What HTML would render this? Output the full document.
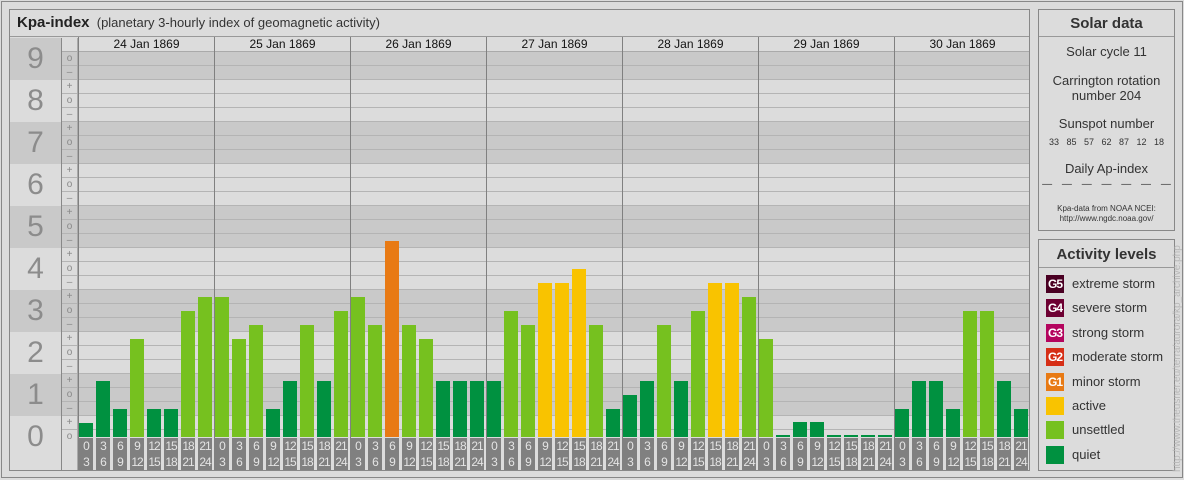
<!DOCTYPE html>
<html><head><meta charset="utf-8"><style>
*{margin:0;padding:0;box-sizing:border-box}
body{width:1184px;height:480px;background:#dcdcdc;font-family:"Liberation Sans",Arial,sans-serif;position:relative;overflow:hidden}
.abs{position:absolute}
.band{position:absolute;left:10px;width:1019px}
.d{background:#c9c9c9}
.num{position:absolute;left:10px;width:51px;text-align:center;font-size:30px;color:#8c8c8c;line-height:42px;height:42px}
.sub{position:absolute;left:61px;top:52px;width:17px}
.sub div{height:14px;line-height:14px;font-size:10px;color:#888;text-align:center}
.day{position:absolute;top:37px;width:136px;height:433px;border-left:1px solid #808080}
.dt{height:14px;line-height:14px;font-size:12px;text-align:center;color:#111}
.bars{position:absolute;left:0;top:14px;height:386px;width:136px;display:flex;align-items:flex-end;gap:3px;padding-left:0}
.bars div{width:14px}
.q{background:#009140}.u{background:#76c11f}.a{background:#f9c300}.m{background:#e87a14}
.lab{position:absolute;left:0;top:401px;display:flex;gap:3px}
.lab div{width:14px;height:32px;background:#808080;color:#e4e4e4;font-size:12px;line-height:16px;text-align:center;letter-spacing:-1px}
.leg{position:absolute;left:1046px;width:18px;height:18px;color:#fff;font-size:12px;font-weight:bold;line-height:18px;text-align:center;letter-spacing:-1px}
.lt{position:absolute;left:1072px;font-size:13px;color:#333;line-height:18px}
.c{text-align:center;color:#333;position:absolute;left:1038px;width:137px}
</style></head><body>
<div class="abs" style="left:1px;top:1px;width:1182px;height:477px;border:1px solid #888"></div>
<div class="abs" style="left:9px;top:9px;width:1021px;height:462px;border:1px solid #888;background:#dcdcdc"></div>
<div class="abs" style="left:10px;top:10px;width:1019px;height:27px;border-bottom:1px solid #999;font-size:13px;line-height:26px;padding-left:7px;color:#333"><b style="font-size:15px;color:#222">Kpa-index</b>&nbsp; (planetary 3-hourly index of geomagnetic activity)</div>
<div class="band d" style="top:38px;height:42px"></div>
<div class="band d" style="top:122px;height:42px"></div>
<div class="band d" style="top:206px;height:42px"></div>
<div class="band d" style="top:290px;height:42px"></div>
<div class="band d" style="top:374px;height:42px"></div>
<div class="abs" style="left:61px;top:38px;width:968px;height:14px;background:#dcdcdc;border-bottom:1px solid #aaa"></div>
<div class="abs" style="left:61px;top:52px;width:968px;height:385px;background:repeating-linear-gradient(to bottom,transparent 0,transparent 13px,#b4b4b4 13px,#b4b4b4 14px)"></div>
<div class="abs" style="left:61px;top:38px;width:1px;height:432px;background:#888"></div>
<div class="abs" style="left:77px;top:38px;width:1px;height:432px;background:#aaa"></div>
<div class="num" style="top:38px">9</div>
<div class="num" style="top:80px">8</div>
<div class="num" style="top:122px">7</div>
<div class="num" style="top:164px">6</div>
<div class="num" style="top:206px">5</div>
<div class="num" style="top:248px">4</div>
<div class="num" style="top:290px">3</div>
<div class="num" style="top:332px">2</div>
<div class="num" style="top:374px">1</div>
<div class="num" style="top:416px">0</div>
<div class="sub"><div>o</div><div>–</div><div>+</div><div>o</div><div>–</div><div>+</div><div>o</div><div>–</div><div>+</div><div>o</div><div>–</div><div>+</div><div>o</div><div>–</div><div>+</div><div>o</div><div>–</div><div>+</div><div>o</div><div>–</div><div>+</div><div>o</div><div>–</div><div>+</div><div>o</div><div>–</div><div>+</div><div>o</div></div>

<div class="day" style="left:78px"><div class="dt">24 Jan 1869</div><div class="bars"><div class="q" style="height:14px"></div><div class="q" style="height:56px"></div><div class="q" style="height:28px"></div><div class="u" style="height:98px"></div><div class="q" style="height:28px"></div><div class="q" style="height:28px"></div><div class="u" style="height:126px"></div><div class="u" style="height:140px"></div></div>
<div class="lab"><div>0<br>3</div><div>3<br>6</div><div>6<br>9</div><div>9<br>12</div><div>12<br>15</div><div>15<br>18</div><div>18<br>21</div><div>21<br>24</div></div></div>

<div class="day" style="left:214px"><div class="dt">25 Jan 1869</div><div class="bars"><div class="u" style="height:140px"></div><div class="u" style="height:98px"></div><div class="u" style="height:112px"></div><div class="q" style="height:28px"></div><div class="q" style="height:56px"></div><div class="u" style="height:112px"></div><div class="q" style="height:56px"></div><div class="u" style="height:126px"></div></div>
<div class="lab"><div>0<br>3</div><div>3<br>6</div><div>6<br>9</div><div>9<br>12</div><div>12<br>15</div><div>15<br>18</div><div>18<br>21</div><div>21<br>24</div></div></div>

<div class="day" style="left:350px"><div class="dt">26 Jan 1869</div><div class="bars"><div class="u" style="height:140px"></div><div class="u" style="height:112px"></div><div class="m" style="height:196px"></div><div class="u" style="height:112px"></div><div class="u" style="height:98px"></div><div class="q" style="height:56px"></div><div class="q" style="height:56px"></div><div class="q" style="height:56px"></div></div>
<div class="lab"><div>0<br>3</div><div>3<br>6</div><div>6<br>9</div><div>9<br>12</div><div>12<br>15</div><div>15<br>18</div><div>18<br>21</div><div>21<br>24</div></div></div>

<div class="day" style="left:486px"><div class="dt">27 Jan 1869</div><div class="bars"><div class="q" style="height:56px"></div><div class="u" style="height:126px"></div><div class="u" style="height:112px"></div><div class="a" style="height:154px"></div><div class="a" style="height:154px"></div><div class="a" style="height:168px"></div><div class="u" style="height:112px"></div><div class="q" style="height:28px"></div></div>
<div class="lab"><div>0<br>3</div><div>3<br>6</div><div>6<br>9</div><div>9<br>12</div><div>12<br>15</div><div>15<br>18</div><div>18<br>21</div><div>21<br>24</div></div></div>

<div class="day" style="left:622px"><div class="dt">28 Jan 1869</div><div class="bars"><div class="q" style="height:42px"></div><div class="q" style="height:56px"></div><div class="u" style="height:112px"></div><div class="q" style="height:56px"></div><div class="u" style="height:126px"></div><div class="a" style="height:154px"></div><div class="a" style="height:154px"></div><div class="u" style="height:140px"></div></div>
<div class="lab"><div>0<br>3</div><div>3<br>6</div><div>6<br>9</div><div>9<br>12</div><div>12<br>15</div><div>15<br>18</div><div>18<br>21</div><div>21<br>24</div></div></div>

<div class="day" style="left:758px"><div class="dt">29 Jan 1869</div><div class="bars"><div class="u" style="height:98px"></div><div class="q" style="height:2px"></div><div class="q" style="height:15px"></div><div class="q" style="height:15px"></div><div class="q" style="height:2px"></div><div class="q" style="height:2px"></div><div class="q" style="height:2px"></div><div class="q" style="height:2px"></div></div>
<div class="lab"><div>0<br>3</div><div>3<br>6</div><div>6<br>9</div><div>9<br>12</div><div>12<br>15</div><div>15<br>18</div><div>18<br>21</div><div>21<br>24</div></div></div>

<div class="day" style="left:894px"><div class="dt">30 Jan 1869</div><div class="bars"><div class="q" style="height:28px"></div><div class="q" style="height:56px"></div><div class="q" style="height:56px"></div><div class="q" style="height:28px"></div><div class="u" style="height:126px"></div><div class="u" style="height:126px"></div><div class="q" style="height:56px"></div><div class="q" style="height:28px"></div></div>
<div class="lab"><div>0<br>3</div><div>3<br>6</div><div>6<br>9</div><div>9<br>12</div><div>12<br>15</div><div>15<br>18</div><div>18<br>21</div><div>21<br>24</div></div></div>

<div class="abs" style="left:1038px;top:9px;width:137px;height:222px;border:1px solid #888"></div>
<div class="abs" style="left:1039px;top:10px;width:135px;height:27px;border-bottom:1px solid #999;text-align:center;font-weight:bold;font-size:15px;line-height:28px;color:#333">Solar data</div>
<div class="c" style="top:44px;font-size:13px">Solar cycle 11</div>
<div class="c" style="top:73px;font-size:13px;line-height:15px">Carrington rotation<br>number 204</div>
<div class="c" style="top:116px;font-size:13px">Sunspot number</div>
<div class="c" style="top:137px;font-size:9px;word-spacing:5px">33 85 57 62 87 12 18</div>
<div class="c" style="top:161px;font-size:13px">Daily Ap-index</div>
<div class="c" style="top:179px;font-size:10px;word-spacing:7px">— — — — — — —</div>
<div class="c" style="top:204px;font-size:8px;line-height:10px">Kpa-data from NOAA NCEI:<br>http://www.ngdc.noaa.gov/</div>
<div class="abs" style="left:1038px;top:239px;width:137px;height:232px;border:1px solid #888"></div>
<div class="abs" style="left:1039px;top:240px;width:135px;height:28px;border-bottom:1px solid #999;text-align:center;font-weight:bold;font-size:15px;line-height:29px;color:#333">Activity levels</div>
<div class="leg" style="top:275px;background:#4a0023">G5</div><div class="lt" style="top:275px">extreme storm</div>
<div class="leg" style="top:299px;background:#6d0032">G4</div><div class="lt" style="top:299px">severe storm</div>
<div class="leg" style="top:324px;background:#b4055e">G3</div><div class="lt" style="top:324px">strong storm</div>
<div class="leg" style="top:348px;background:#d62e16">G2</div><div class="lt" style="top:348px">moderate storm</div>
<div class="leg" style="top:373px;background:#e87a14">G1</div><div class="lt" style="top:373px">minor storm</div>
<div class="leg" style="top:397px;background:#f9c300"></div><div class="lt" style="top:397px">active</div>
<div class="leg" style="top:421px;background:#76c11f"></div><div class="lt" style="top:421px">unsettled</div>
<div class="leg" style="top:446px;background:#009140"></div><div class="lt" style="top:446px">quiet</div>
<div class="abs" style="left:1068px;top:356px;width:220px;height:12px;font-size:10px;line-height:12px;color:#b8b8b8;transform:rotate(-90deg);transform-origin:center;text-align:center;white-space:nowrap">http://www.theusner.eu/terra/aurora/kp_archive.php</div>
</body></html>
